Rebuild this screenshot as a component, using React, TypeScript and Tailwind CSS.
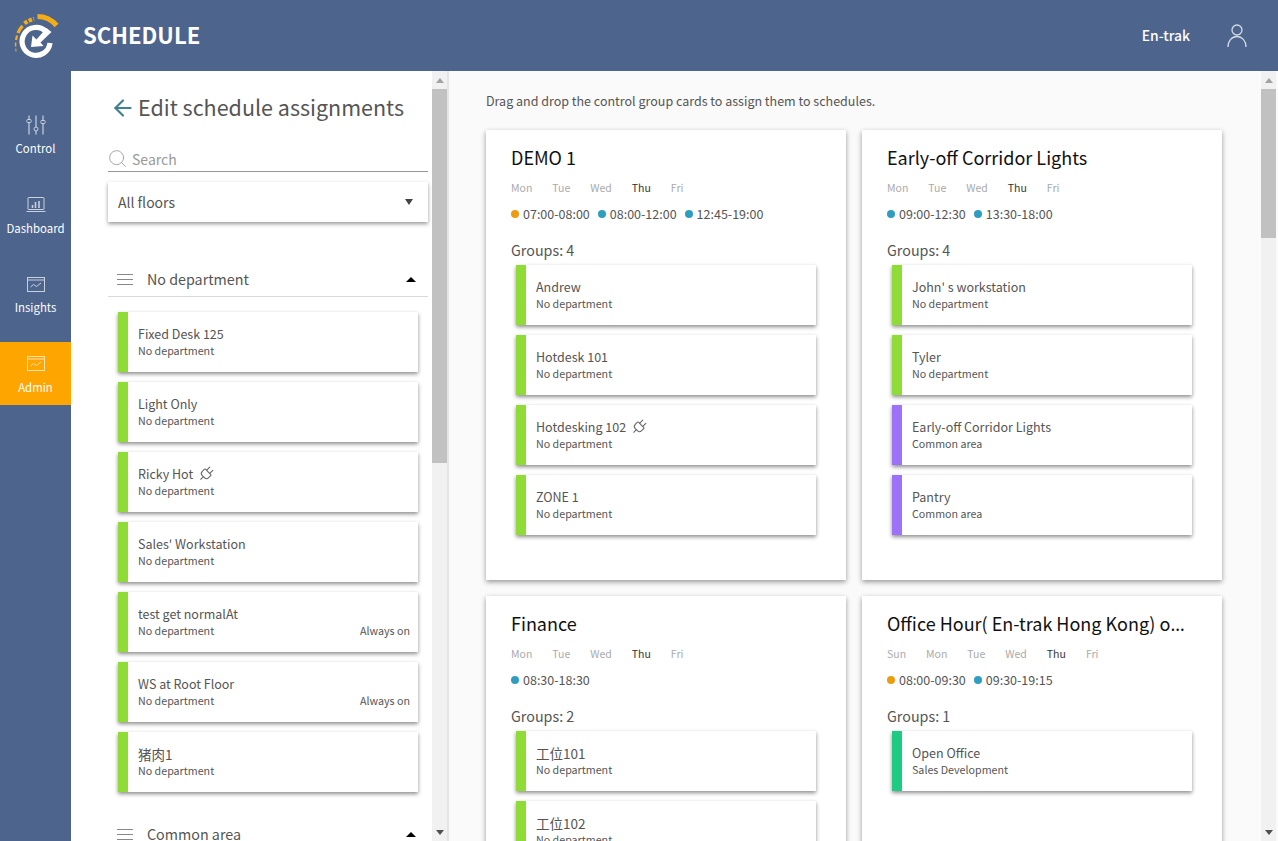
import { ArrowLeft, Plug as PlugIcon, Search } from "lucide-react";

type Group = { name: string; dept: string; color?: string; plug?: boolean; always?: boolean; cjk?: boolean };
type Slot = { time: string; color: string };

const GREEN = "bg-[#8fdc37]";
const ORANGE = "bg-[#ef9b0f]";
const BLUE = "bg-[#2e9dc0]";

const noDept: Group[] = [
  { name: "Fixed Desk 125", dept: "No department" },
  { name: "Light Only", dept: "No department" },
  { name: "Ricky Hot", dept: "No department", plug: true },
  { name: "Sales' Workstation", dept: "No department" },
  { name: "test get normalAt", dept: "No department", always: true },
  { name: "WS at Root Floor", dept: "No department", always: true },
  { name: "猪肉1", dept: "No department", cjk: true },
];

const schedules: { title: string; days: string[]; slots: Slot[]; groups: Group[] }[] = [
  {
    title: "DEMO 1",
    days: ["Mon", "Tue", "Wed", "Thu", "Fri"],
    slots: [
      { time: "07:00-08:00", color: ORANGE },
      { time: "08:00-12:00", color: BLUE },
      { time: "12:45-19:00", color: BLUE },
    ],
    groups: [
      { name: "Andrew", dept: "No department" },
      { name: "Hotdesk 101", dept: "No department" },
      { name: "Hotdesking 102", dept: "No department", plug: true },
      { name: "ZONE 1", dept: "No department" },
    ],
  },
  {
    title: "Early-off Corridor Lights",
    days: ["Mon", "Tue", "Wed", "Thu", "Fri"],
    slots: [
      { time: "09:00-12:30", color: BLUE },
      { time: "13:30-18:00", color: BLUE },
    ],
    groups: [
      { name: "John' s workstation", dept: "No department" },
      { name: "Tyler", dept: "No department" },
      { name: "Early-off Corridor Lights", dept: "Common area", color: "bg-[#9b72f8]" },
      { name: "Pantry", dept: "Common area", color: "bg-[#9b72f8]" },
    ],
  },
  {
    title: "Finance",
    days: ["Mon", "Tue", "Wed", "Thu", "Fri"],
    slots: [{ time: "08:30-18:30", color: BLUE }],
    groups: [
      { name: "工位101", dept: "No department", cjk: true },
      { name: "工位102", dept: "No department", cjk: true },
    ],
  },
  {
    title: "Office Hour( En-trak Hong Kong) office hours",
    days: ["Sun", "Mon", "Tue", "Wed", "Thu", "Fri"],
    slots: [
      { time: "08:00-09:30", color: ORANGE },
      { time: "09:30-19:15", color: BLUE },
    ],
    groups: [{ name: "Open Office", dept: "Sales Development", color: "bg-[#1fcb82]" }],
  },
];

function Logo() {
  // drawn in a 46 box that sits at (13,13) of the page, ring centre (23,29.5)
  return (
    <svg width="46" height="46" viewBox="0 0 46 46" fill="none">
      <path d="M3 38.5 L2.8 35.5" stroke="#f5ad17" strokeWidth="1" />
      <path d="M2.6 33.5 L2.6 29.5" stroke="#f5ad17" strokeWidth="1.5" />
      <path d="M3 27 L4 22.5" stroke="#f5ad17" strokeWidth="2.2" />
      <path d="M5 20 Q6.5 16 9.5 12.8" stroke="#f5ad17" strokeWidth="3.2" />
      <path d="M11.5 10.5 Q15 7.5 21 5.8" stroke="#f5ad17" strokeWidth="4.2" strokeDasharray="3.6 1.4" />
      <path d="M24.5 3.5 Q36 3.5 43.5 12.5" stroke="#f5ad17" strokeWidth="5.2" />
      <path d="M33 18.5 A14 14 0 1 0 37 30" stroke="#fff" strokeWidth="5.2" />
      <path d="M18 34 L19.5 22.5 L23.5 26.5 L33.5 15 L38.5 19 L27.5 29.5 L30.5 33 Z" fill="#fff" />
    </svg>
  );
}

function SlidersKnobs() {
  return (
    <svg width="20" height="20" viewBox="0 0 20 20" fill="none" stroke="#c9d1de" strokeWidth="1">
      <path d="M3 0.5 V19.5 M10 0.5 V19.5 M17 0.5 V19.5" strokeWidth="1.2" />
      <rect x="0.8" y="4.5" width="4.4" height="3" rx="1" fill="#4d648d" />
      <circle cx="10" cy="14" r="2" fill="#4d648d" />
      <rect x="14.8" y="5.5" width="4.4" height="3" rx="1" fill="#4d648d" />
    </svg>
  );
}

function MonitorChart() {
  return (
    <svg width="20" height="17" viewBox="0 0 20 17" fill="none" stroke="#c9d1de" strokeWidth="1">
      <rect x="2" y="1.5" width="16" height="12" rx="0.5" />
      <path d="M0.5 15.5 H19.5" />
      <path d="M6.5 12 V9 M9.5 12 V6 M13 12 V5" strokeWidth="1.6" />
    </svg>
  );
}

function WindowTrend() {
  return (
    <svg width="18" height="15" viewBox="0 0 18 15" fill="none" stroke="currentColor" strokeWidth="1">
      <rect x="0.5" y="0.5" width="17" height="14" />
      <path d="M0.5 3 H17.5" />
      <path d="M3.5 10 L6.5 7.5 L9.5 9.5 L14 6" />
    </svg>
  );
}

function UserOutline() {
  return (
    <svg width="20" height="23" viewBox="0 0 20 23" fill="none" stroke="#d5dbe6" strokeWidth="1.3">
      <circle cx="10" cy="6" r="5" />
      <path d="M1 23 C1 16.5 5 12.5 10 12.5 S19 16.5 19 23" />
    </svg>
  );
}

function NavItem({ icon, label, active }: { icon: React.ReactNode; label: string; active?: boolean }) {
  return (
    <div
      className={`flex h-[63px] flex-col items-center gap-[5px] pt-[12px] text-[11.4px] leading-[16px] text-white ${
        active ? "bg-[#ffa500]" : ""
      }`}
    >
      <div className={`flex h-[20px] items-center ${active ? "text-[#ffe3ad]" : "text-[#c9d1de]"}`}>{icon}</div>
      <span>{label}</span>
    </div>
  );
}

function GroupCard({ group }: { group: Group }) {
  return (
    <div className="flex h-[60px] w-[300px] shrink-0 bg-white shadow-[0_2px_4px_rgba(0,0,0,0.45)]">
      <div className={`w-[10px] shrink-0 ${group.color ?? GREEN}`} />
      <div className="flex min-w-0 flex-1 flex-col pl-[10px] pr-[8px] pt-[13px]">
        <div className={`flex h-[18px] items-center leading-[18px] text-[#555] ${group.cjk ? "text-[13.5px]" : "text-[12.5px]"}`}>
          <span>{group.name}</span>
          {group.plug && <PlugIcon size={18} strokeWidth={1.4} className="ml-[4px] rotate-45 text-[#666]" />}
        </div>
        <div className="flex items-center justify-between text-[10.7px] leading-[16px] text-[#555]">
          <span>{group.dept}</span>
          {group.always && <span>Always on</span>}
        </div>
      </div>
    </div>
  );
}

function Scrollbar({ thumb }: { thumb: string }) {
  return (
    <div className="flex h-full w-[15px] shrink-0 flex-col bg-[#f1f1f1]">
      <div className="flex h-[18px] items-center justify-center">
        <div className="h-0 w-0 border-x-[4px] border-b-[5px] border-x-transparent border-b-[#a3a3a3]" />
      </div>
      <div className={`bg-[#c1c1c1] ${thumb}`} />
      <div className="flex-1" />
      <div className="flex h-[18px] items-center justify-center">
        <div className="h-0 w-0 border-x-[4px] border-t-[5px] border-x-transparent border-t-[#505050]" />
      </div>
    </div>
  );
}

function DeptHeader({ label }: { label: string }) {
  return (
    <div className="flex h-[35px] shrink-0 items-center border-b border-[#d9d9d9] pl-[9px] pr-[12px]">
      <div className="flex w-[16px] flex-col gap-[4px]">
        <div className="h-px bg-[#888]" />
        <div className="h-px bg-[#888]" />
        <div className="h-px bg-[#888]" />
      </div>
      <span className="ml-[14px] flex-1 text-[14.3px] text-[#555]">{label}</span>
      <div className="h-0 w-0 border-x-[5px] border-b-[5px] border-x-transparent border-b-black" />
    </div>
  );
}

function ScheduleCard({ schedule }: { schedule: (typeof schedules)[number] }) {
  return (
    <div className="h-[450px] w-[360px] shrink-0 bg-white px-[25px] pt-[14px] shadow-[0_2px_5px_rgba(0,0,0,0.4)]">
      {/* ellipsis takes the outer font, Noto Sans has a baseline one */}
      <h2 className="truncate font-['Noto_Sans'] text-[18px] leading-[26px] text-[#111]">
        <span className="font-['Noto_Sans_CJK_TC']">{schedule.title}</span>
      </h2>
      <div className="mt-[9px] flex gap-[20px] text-[10.5px] leading-[16px] text-[#aaa]">
        {schedule.days.map((d) => (
          <span key={d} className={d === "Thu" ? "text-[#333]" : ""}>
            {d}
          </span>
        ))}
      </div>
      <div className="mt-[9px] flex gap-[8px] text-[12.5px] leading-[18px] text-[#555]">
        {schedule.slots.map((s) => (
          <div key={s.time} className="flex items-center gap-[4px]">
            <span className={`h-[8px] w-[8px] rounded-full ${s.color}`} />
            <span>{s.time}</span>
          </div>
        ))}
      </div>
      <div className="mt-[17px] text-[14.3px] leading-[20px] text-[#555]">Groups: {schedule.groups.length}</div>
      <div className="ml-[5px] mt-[5px] flex flex-col gap-[10px]">
        {schedule.groups.map((g) => (
          <GroupCard key={g.name} group={g} />
        ))}
      </div>
    </div>
  );
}

export default function App() {
  return (
    <div
      className="flex h-[841px] w-[1278px] flex-col overflow-hidden bg-[#4d648d]"
      style={{ fontFamily: '"Noto Sans CJK TC", "Noto Sans CJK SC", sans-serif' }}
    >
      <header className="flex h-[71px] shrink-0 items-center pl-[13px] pr-[31px] text-white">
        <Logo />
        <h1 className="-mt-[2px] ml-[24px] flex-1 text-[22.1px] font-semibold">SCHEDULE</h1>
        <span className="text-[13.9px] font-medium">En-trak</span>
        <div className="ml-[37px]">
          <UserOutline />
        </div>
      </header>
      <div className="flex min-h-0 flex-1">
        <nav className="flex w-[71px] shrink-0 flex-col pt-[32px] [&>*+*]:mt-[16.67px]">
          <NavItem icon={<SlidersKnobs />} label="Control" />
          <NavItem icon={<MonitorChart />} label="Dashboard" />
          <NavItem icon={<WindowTrend />} label="Insights" />
          <NavItem icon={<WindowTrend />} label="Admin" active />
        </nav>
        <aside className="flex w-[378px] shrink-0 border-r-2 border-[#e4e4e4] bg-white">
          <div className="flex w-[361px] shrink-0 flex-col overflow-hidden pl-[37px] pr-[4px]">
            <div className="mt-[19px] flex h-[35px] shrink-0 items-center">
              <ArrowLeft size={26} strokeWidth={2} className="ml-[1.7px] text-[#41808f]" />
              <span className="ml-[2.3px] text-[21.5px] text-[#555]">Edit schedule assignments</span>
            </div>
            <div className="mt-[16px] flex h-[31px] shrink-0 items-center border-b border-[#999] pt-[7px]">
              <Search size={21} strokeWidth={1} className="-ml-[1.5px] -mt-[2px] text-[#999]" />
              <span className="ml-[4.5px] text-[14px] text-[#999]">Search</span>
            </div>
            <div className="mt-[10px] flex h-[40px] shrink-0 items-center justify-between bg-white pl-[10px] pr-[15px] text-[14px] text-[#555] shadow-[0_2px_4px_rgba(0,0,0,0.4)]">
              <span>All floors</span>
              <div className="h-0 w-0 border-x-[4px] border-t-[6px] border-x-transparent border-t-[#444]" />
            </div>
            <div className="mt-[40px]">
              <DeptHeader label="No department" />
            </div>
            <div className="ml-[10px] mt-[15px] flex flex-col gap-[10px]">
              {noDept.map((g) => (
                <GroupCard key={g.name} group={g} />
              ))}
            </div>
            <div className="mt-[25px]">
              <DeptHeader label="Common area" />
            </div>
          </div>
          <Scrollbar thumb="h-[374px]" />
        </aside>
        <main className="flex min-w-0 flex-1 bg-[#fafafa]">
          <div className="min-w-0 flex-1 overflow-hidden pl-[37px]">
            <p className="mt-[21px] text-[12.5px] leading-[18px] text-[#555]">
              Drag and drop the control group cards to assign them to schedules.
            </p>
            <div className="mt-[20px] grid w-[736px] grid-cols-[360px_360px] gap-[16px]">
              {schedules.map((s) => (
                <ScheduleCard key={s.title} schedule={s} />
              ))}
            </div>
          </div>
          <div className="mr-[2px] h-full">
            <Scrollbar thumb="h-[149px]" />
          </div>
        </main>
      </div>
    </div>
  );
}
